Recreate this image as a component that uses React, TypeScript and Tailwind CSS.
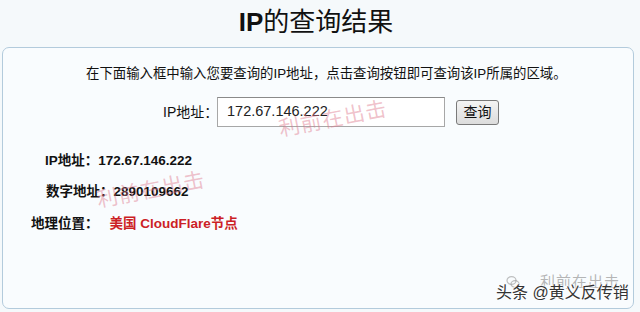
import React from "react";

const FONT = { fontFamily: '"Liberation Sans", "Noto Sans CJK SC", sans-serif' };

function Watermark({ className }: { className: string }) {
  return (
    <div
      className={`absolute whitespace-nowrap text-[21px] leading-none tracking-[1px] text-[rgba(222,120,140,0.45)] rotate-[-11deg] pointer-events-none ${className}`}
    >
      利前在出击
    </div>
  );
}

export default function App() {
  return (
    <div className="relative w-[640px] h-[312px] overflow-hidden bg-[#f5f9fb] text-[#111]" style={FONT}>
      <div className="h-[47px] flex items-center justify-center pl-[-4px]">
        <h1 className="text-[26px] leading-none text-[#111] pr-[8px] pb-[4px]">
          <span className="font-bold">IP</span>
          <span>的查询结果</span>
        </h1>
      </div>
      <div className="relative ml-[2px] w-[632px] h-[262px] rounded-[7px] border border-[#b3cbdc] bg-[#f9fcfe]">
        <p className="pt-[17px] pl-[83px] text-[13.4px] leading-[18px] whitespace-nowrap">
          在下面输入框中输入您要查询的IP地址，点击查询按钮即可查询该IP所属的区域。
        </p>
        <div className="flex items-center mt-[14px] pl-[160px]">
          <span className="text-[14px] w-[54px] whitespace-nowrap">IP地址：</span>
          <div className="w-[228px] h-[30px] border border-[#a7a7a7] border-t-[#8a8a8a] bg-white flex items-center pl-[9px] text-[14.5px] text-[#222]">
            172.67.146.222
          </div>
          <button className="ml-[11px] w-[43px] h-[25px] rounded-[3px] border border-[#7a7a7a] bg-gradient-to-b from-[#f4f4f4] to-[#dcdcdc] text-[14px] leading-none text-[#111]">
            查询
          </button>
        </div>
        <div className="mt-[24px] pl-[42px] text-[13.5px] font-bold whitespace-nowrap leading-[20px]">
          IP地址：172.67.146.222
        </div>
        <div className="mt-[11px] pl-[43px] text-[13.5px] font-bold whitespace-nowrap leading-[20px]">
          数字地址：2890109662
        </div>
        <div className="mt-[12px] pl-[28px] text-[13.5px] font-bold whitespace-nowrap leading-[20px] flex">
          <span>地理位置：</span>
          <span className="ml-[11px] text-[#cc1f26]">美国 CloudFlare节点</span>
        </div>
        <Watermark className="left-[275px] top-[60px]" />
        <Watermark className="left-[93px] top-[131px]" />
      </div>
      <div className="absolute left-[506px] top-[274px] flex items-center gap-[6px] text-[15px] leading-none text-[rgba(150,150,150,0.7)]">
        <svg width="14" height="14" viewBox="0 0 14 14" fill="none" stroke="rgba(150,150,150,0.6)" strokeWidth="1.2">
          <ellipse cx="5.5" cy="5.5" rx="4.5" ry="3.8" />
          <ellipse cx="9" cy="9" rx="4" ry="3.3" />
        </svg>
        <span className="ml-[14px] tracking-[1px]">利前在出击</span>
      </div>
      <div
        className="absolute left-[496px] top-[283px] text-[16px] leading-[19px] text-[#333] whitespace-nowrap"
        style={{ textShadow: "0 0 2px #fff, 0 0 2px #fff, 0 0 3px #fff" }}
      >
        头条 @黄义反传销
      </div>
    </div>
  );
}
